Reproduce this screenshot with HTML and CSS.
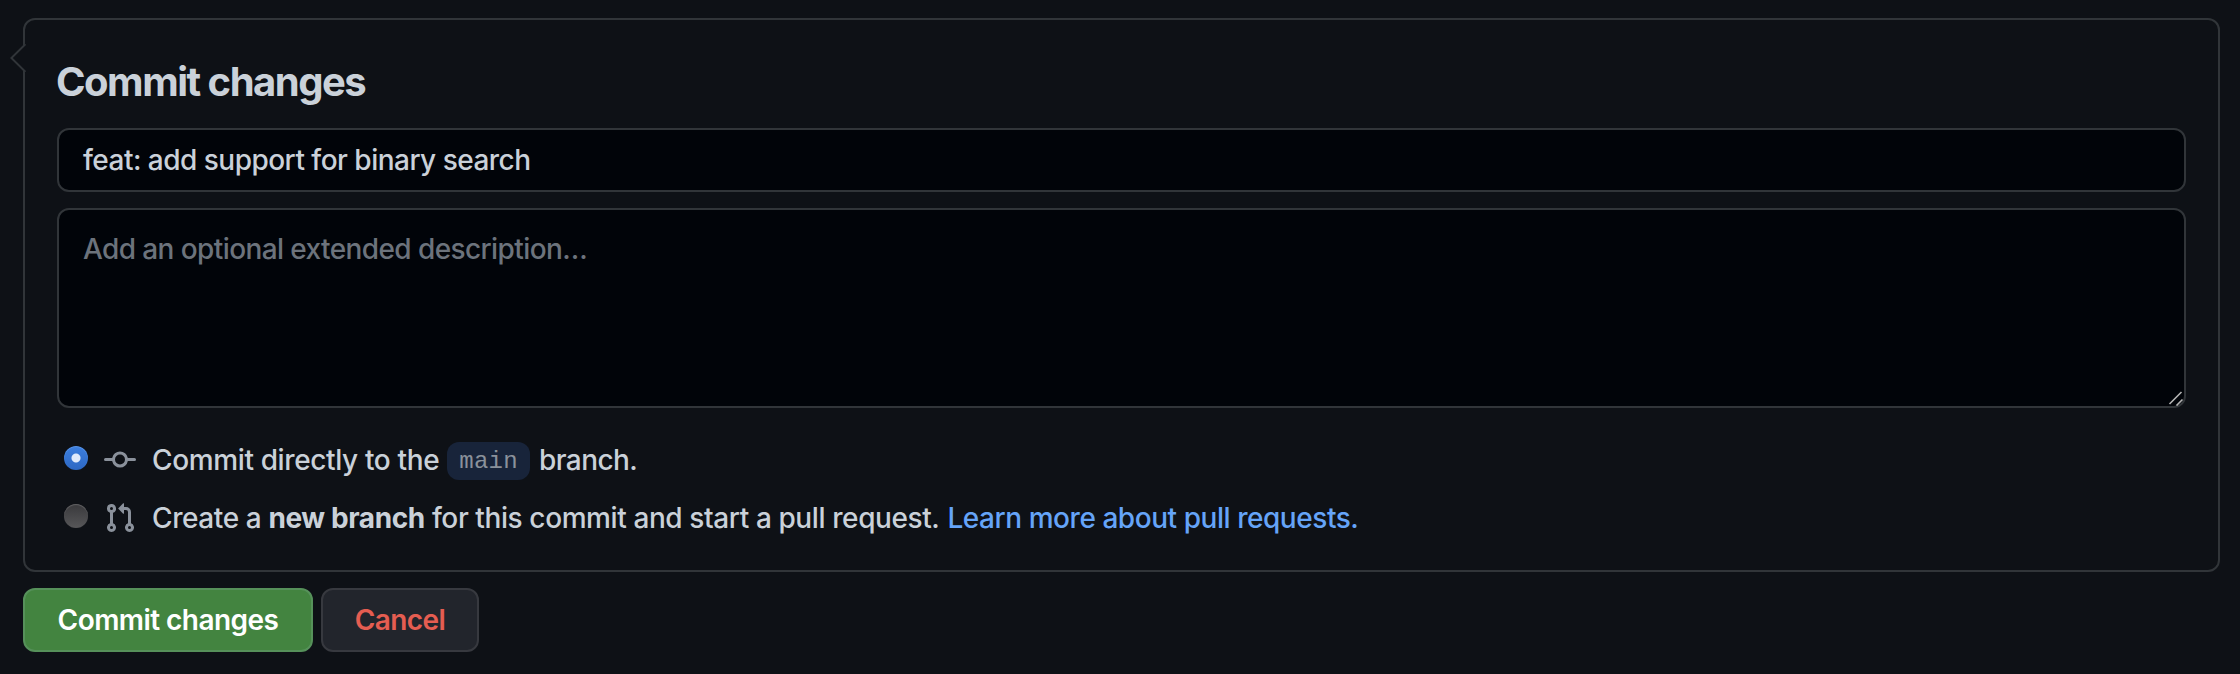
FILE: index.html
```html
<!DOCTYPE html>
<html lang="en">
<head>
<meta charset="utf-8">
<title>Commit changes</title>
<link rel="stylesheet" href="styles.css">
</head>
<body>
<form class="commit-form">
  <section class="panel">
    <svg class="panel-caret" viewBox="0 0 16 30" width="16" height="30" aria-hidden="true">
      <path class="caret-fill" d="M16 1.5H15L1.4 15L15 28.5H16Z"/>
      <path class="caret-line" d="M15.4 1.2L1.4 15L15.4 28.8"/>
    </svg>
    <h3 class="title">Commit changes</h3>
    <div class="field summary">feat: add support for binary search</div>
    <div class="field description">
      Add an optional extended description…
      <svg class="grip" viewBox="0 0 16 16" width="16" height="16" aria-hidden="true"><path d="M1.5 14L13.5 2M8.5 15.5L14.5 9.5"/></svg>
    </div>
    <div class="options">
      <label class="option">
        <span class="radio checked"></span>
        <svg class="icon" viewBox="0 0 16 16" width="32" height="32" aria-hidden="true"><path fill-rule="evenodd" d="M10.5 7.75a2.5 2.5 0 11-5 0 2.5 2.5 0 015 0zm1.43.75a4.002 4.002 0 01-7.86 0H.75a.75.75 0 110-1.5h3.32a4.001 4.001 0 017.86 0h3.32a.75.75 0 110 1.5h-3.32z"/></svg>
        <span class="option-text direct"><span>Commit directly to the</span><code class="branch">main</code><span class="tail">branch.</span></span>
      </label>
      <label class="option">
        <span class="radio"></span>
        <svg class="icon" viewBox="0 0 16 16" width="32" height="32" aria-hidden="true"><path fill-rule="evenodd" d="M7.177 3.073L9.573.677A.25.25 0 0110 .854v4.792a.25.25 0 01-.427.177L7.177 3.427a.25.25 0 010-.354zM3.75 2.5a.75.75 0 100 1.5.75.75 0 000-1.5zm-2.25.75a2.25 2.25 0 113 2.122v5.256a2.251 2.251 0 11-1.5 0V5.372A2.25 2.25 0 011.5 3.25zM11 2.5h-1V4h1a1 1 0 011 1v5.628a2.251 2.251 0 101.5 0V5A2.5 2.5 0 0011 2.5zm1 10.25a.75.75 0 111.5 0 .75.75 0 01-1.5 0zM3.75 12a.75.75 0 100 1.5.75.75 0 000-1.5z"/></svg>
        <span class="option-text"><span>Create a <b>new branch</b> for this commit and start a pull request.</span><a class="link">Learn more about pull requests.</a></span>
      </label>
    </div>
  </section>
  <div class="actions">
    <button type="button" class="btn primary">Commit changes</button>
    <button type="button" class="btn danger">Cancel</button>
  </div>
</form>
</body>
</html>
```
FILE: styles.css
```css
* { box-sizing: border-box; }

body {
  margin: 0;
  background: #0e1116;
  color: #cad1d9;
  font: 450 28px/42px Inter, "Liberation Sans", sans-serif;
  white-space: nowrap;
}

.commit-form { padding: 18px 20px 22px 23px; }

.panel {
  position: relative;
  height: 554px;
  padding: 36px 32px 0;
  border: 2px solid #313539;
  border-radius: 12px;
}

.panel-caret { position: absolute; left: -15px; top: 23px; }
.caret-fill { fill: #0e1116; }
.caret-line { fill: none; stroke: #313539; stroke-width: 2; }

.title {
  height: 72px;
  margin: 0 0 0 -1px;
  font-size: 40px;
  font-weight: 670;
  line-height: 52px;
  letter-spacing: -1.5px;
}

.field {
  position: relative;
  background: #010409;
  border: 2px solid #313539;
  border-radius: 12px;
  padding: 9px 24px;
}
.summary { height: 64px; letter-spacing: -0.52px; }
.description {
  height: 200px;
  margin-top: 16px;
  padding-top: 18px;
  color: #6c737c;
  letter-spacing: -0.6px;
}
.grip { position: absolute; right: 0; bottom: 0; }
.grip path { fill: none; stroke: #b4b4b4; stroke-width: 1.6; }

.options {
  display: grid;
  gap: 16px;
  padding: 31px 0 0 7px;
}
.option { display: flex; align-items: center; height: 42px; }
.radio {
  width: 24px;
  height: 24px;
  margin: 0 16px 4px 0;
  border-radius: 50%;
  background: linear-gradient(#39393c, #575759);
  box-shadow: inset 0 1px 1px #626264;
}
.radio.checked {
  background: radial-gradient(circle, #dfeafb 4px, transparent 5px), linear-gradient(#3c7fdf, #2d68c3);
  box-shadow: inset 0 1px 1px #5c96e6;
}
.icon { fill: #8a919b; margin-right: 16px; }
.option-text { display: flex; align-items: center; letter-spacing: -0.4px; }
.direct { letter-spacing: -0.37px; }
.branch {
  height: 38px;
  margin: 2px 9px 0 8px;
  padding: 0 12px;
  border-radius: 12px;
  background: #18243a;
  color: #8a919b;
  font: 24px/40px "Liberation Mono", monospace;
  letter-spacing: 0.3px;
}
.tail { letter-spacing: -0.6px; }
.link { margin-left: 8px; color: #65a4f8; letter-spacing: -0.45px; }

.actions { display: flex; gap: 8px; margin-top: 16px; }
.btn {
  height: 64px;
  padding: 0;
  border: 2px solid #37393f;
  border-radius: 12px;
  background: #22252c;
  font-family: Inter, "Liberation Sans", sans-serif;
  font-size: 28px;
  font-weight: 590;
  line-height: 40px;
}
.primary {
  width: 290px;
  border-color: #56915a;
  background: #438440;
  color: #fff;
  letter-spacing: -0.55px;
}
.danger { width: 158px; color: #e55d51; letter-spacing: -0.6px; }
```
